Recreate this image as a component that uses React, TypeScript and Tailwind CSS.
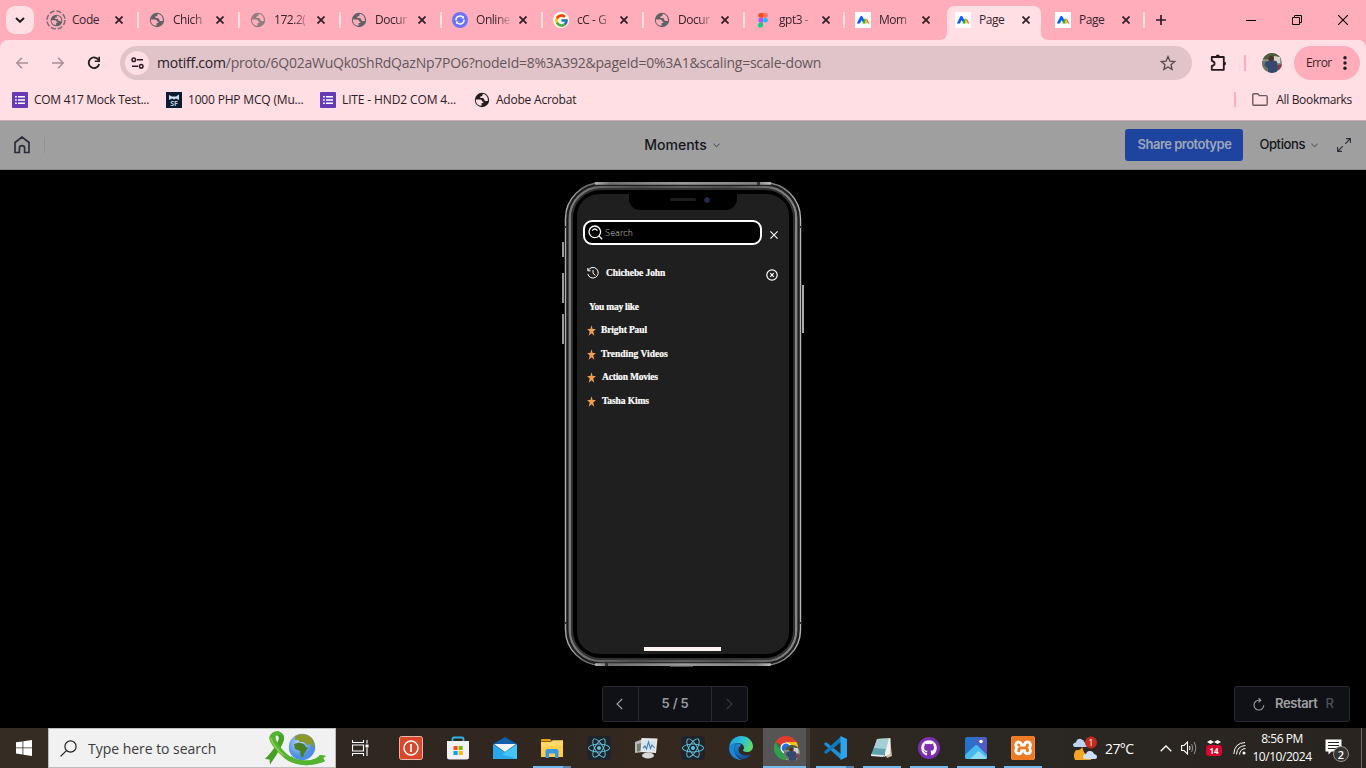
import React from "react";
import { FaReact, FaGithub } from "react-icons/fa";
import { SiXampp } from "react-icons/si";
import { FcGoogle } from "react-icons/fc";

type Kind = "loading" | "globe" | "globeLight" | "sync" | "google" | "figma" | "motiff";

function Globe({ size = 16, color = "#5f6368", bg = "#ffadbb" }: { size?: number; color?: string; bg?: string }) {
  return (
    <svg width={size} height={size} viewBox="0 0 16 16" className="shrink-0">
      <circle cx="8" cy="8" r="7.2" fill={color} />
      <path d="M1.9 7.6H6.2C7.6 7.7 8 8.4 8 9.5H9.3V10.9H7.6V13.6C5.6 13.8 3.6 12.8 2.6 11.2C2.1 10.2 1.8 8.8 1.9 7.6Z" fill={bg} />
      <path d="M8.6 2.2L8.2 4.2H6.4V6H8.6C10 6.2 10.2 7.4 10.6 8.4C11.4 9.2 12.8 8.8 13.8 8.9C14.4 5.6 12.4 2.8 9.4 2.1Z" fill={bg} />
    </svg>
  );
}

function Favicon({ kind }: { kind: Kind }) {
  switch (kind) {
    case "loading":
      return (
        <span className="relative flex h-4 w-4 items-center justify-center">
          <Globe size={13} />
          <svg width="20" height="20" viewBox="0 0 20 20" className="absolute -left-0.5 -top-0.5">
            <circle cx="10" cy="10" r="9" fill="none" stroke="#7d6b70" strokeWidth="1.5" strokeDasharray="5.2 1.9" />
          </svg>
        </span>
      );
    case "globe":
      return <Globe />;
    case "globeLight":
      return <Globe color="#8b7f84" />;
    case "sync":
      return (
        <svg width="16" height="16" viewBox="0 0 16 16">
          <circle cx="8" cy="8" r="8" fill="#6b74f8" />
          <path d="M4 8.4A4 4 0 0 1 10.8 5.2M12 7.6A4 4 0 0 1 5.200 10.800" fill="none" stroke="#fff" strokeWidth="1.5" />
          <path d="M12 3.8V6.600H9.4ZM4 12.2V9.4H6.6Z" fill="#fff" />
        </svg>
      );
    case "google":
      return (
        <span className="flex h-4 w-4 items-center justify-center rounded-full bg-white">
          <FcGoogle size={15} />
        </span>
      );
    case "figma":
      return (
        <svg width="16" height="16" viewBox="0 0 16 16">
          <path d="M8 1H5.6A2.4 2.4 0 0 0 5.6 5.8H8Z" fill="#f24e1e" />
          <path d="M8 1H10.6A2.4 2.4 0 0 1 10.6 5.8H8Z" fill="#ff7262" />
          <path d="M8 5.8H5.6A2.4 2.4 0 0 0 5.6 10.6H8Z" fill="#a259ff" />
          <circle cx="10.5" cy="8.2" r="2.4" fill="#1abcfe" />
          <path d="M8 10.6H5.6A2.5 2.5 0 1 0 8 13.2Z" fill="#0acf83" />
        </svg>
      );
    default:
      return (
        <svg width="16" height="16" viewBox="0 0 16 16">
          <rect width="16" height="16" fill="#fff" />
          <path d="M1.8 11.500L5.400 4.200Q6.200 3.600 7.400 4.200L9.400 8.500L8 10.500L6.600 8L5 11.500Z" fill="#0b5cff" />
          <path d="M7.400 11.500L9.400 7Q10.200 6.200 11 7L10.400 11.500Z" fill="#11b34a" />
          <path d="M9.800 11.500L10.600 6.800Q11.600 6.400 12 7.600L11.800 11.500Z" fill="#ffc400" />
          <path d="M11.400 7L12.400 7.600L14.200 11.500H12.800Z" fill="#f2453d" />
        </svg>
      );
  }
}

const tabs: { title: string; kind: Kind; active?: boolean; narrow?: boolean; sep?: boolean }[] = [
  { title: "Code", kind: "loading", sep: true },
  { title: "Chich", kind: "globe", sep: true },
  { title: "172.2(", kind: "globeLight", sep: true },
  { title: "Docur", kind: "globe", sep: true },
  { title: "Online", kind: "sync", sep: true },
  { title: "cC - G", kind: "google", sep: true },
  { title: "Docur", kind: "globe", sep: true },
  { title: "gpt3 -", kind: "figma", narrow: true, sep: true },
  { title: "Mom", kind: "motiff", narrow: true },
  { title: "Page", kind: "motiff", narrow: true, active: true },
  { title: "Page", kind: "motiff", narrow: true, sep: true },
];

function TabItem({ tab }: { tab: (typeof tabs)[number] }) {
  const fade = tab.title === "Page" || tab.title === "Code" ? "text-[#33262a]" : "[mask-image:linear-gradient(to_right,#000_60%,transparent_105%)]";
  return (
    <div className={`relative flex h-7 shrink-0 items-center pl-[11px] ${tab.narrow ? "w-[100px]" : "w-[101px]"}`}>
      {tab.active && (
        <svg width="110" height="34" viewBox="0 0 110 34" className="absolute -left-[5px] top-0">
          <path d="M0 34Q8 34 8 26V8Q8 0 16 0H94Q102 0 102 8V26Q102 34 110 34Z" fill="#ffdee4" />
        </svg>
      )}
      <span className="relative flex h-4 w-4 shrink-0 items-center justify-center"><Favicon kind={tab.kind} /></span>
      <span className={`relative ml-2 w-[34px] whitespace-nowrap text-[12px] leading-4 tracking-[-0.45px] text-[#33262a] ${fade}`}>
        {tab.title}
      </span>
      <svg width="8" height="8" viewBox="0 0 8 8" className="relative ml-[9px]">
        <path d="M0.5 0.5L7.5 7.5M7.5 0.5L0.5 7.5" stroke="#2b1d21" strokeWidth="1.7" />
      </svg>
      {tab.sep && <span className="-mr-px ml-auto h-4 w-[2px] bg-[#ffdee4]" />}
    </div>
  );
}

function TabStrip() {
  return (
    <div className="flex h-10 items-start bg-[#ffadbb] pt-[6px]">
      <div className="ml-[6px] flex h-7 w-7 items-center justify-center rounded-[9px] bg-[#ffdee4]">
        <svg width="10" height="6" viewBox="0 0 10 6"><path d="M1 1L5 4.8L9 1" fill="none" stroke="#1f1f1f" strokeWidth="2" /></svg>
      </div>
      <div className="flex pl-[3px]">
        {tabs.map((t, i) => <TabItem key={i} tab={t} />)}
      </div>
      <div className="flex h-7 flex-1 items-center">
        <svg width="10" height="10" viewBox="0 0 10 10" className="ml-[12px]"><path d="M5 0V10M0 5H10" stroke="#2b1d21" strokeWidth="1.7" /></svg>
        <div className="ml-auto flex items-center">
          <svg width="10" height="10" viewBox="0 0 10 10"><path d="M0 5.5H10" stroke="#000" /></svg>
          <svg width="10" height="10" viewBox="0 0 10 10" className="ml-9"><path d="M0.5 2.5H7.5V9.5H0.5ZM2.5 2.5V0.5H9.5V7.5H7.5" fill="none" stroke="#000" /></svg>
          <svg width="10" height="10" viewBox="0 0 10 10" className="ml-9 mr-[18px]"><path d="M0 0L10 10M10 0L0 10" stroke="#000" strokeWidth="1.1" /></svg>
        </div>
      </div>
    </div>
  );
}

function AddressRow() {
  return (
    <div className="bg-[#ffadbb]">
      <div className="flex h-[46px] items-center rounded-t-lg bg-[#ffdee4]">
        <svg width="12" height="12" viewBox="0 0 12 12" className="ml-4"><path d="M12 6H1M6 0.7L0.8 6L6 11.3" fill="none" stroke="#a98f95" strokeWidth="1.6" /></svg>
        <svg width="12" height="12" viewBox="0 0 12 12" className="ml-6"><path d="M0 6H11M6 0.7L11.2 6L6 11.3" fill="none" stroke="#a98f95" strokeWidth="1.6" /></svg>
        <svg width="14" height="14" viewBox="0 0 14 14" className="ml-[23px]">
          <path d="M11.8 4.4A5.3 5.3 0 1 0 12.2 8" fill="none" stroke="#1f1f1f" strokeWidth="1.8" />
          <path d="M12.2 0.8V5.2H7.8" fill="none" stroke="#1f1f1f" strokeWidth="1.6" />
        </svg>
        <div className="ml-[19px] flex h-[34px] w-[1072px] items-center rounded-full bg-[#e1c4c9] pl-[5px]">
          <span className="flex h-6 w-6 items-center justify-center rounded-full bg-[#ffdee4]">
            <svg width="13" height="12" viewBox="0 0 13 12"><g fill="none" stroke="#2b1d21" strokeWidth="1.5"><circle cx="2.8" cy="2.8" r="1.8" /><circle cx="10.2" cy="9.2" r="1.8" /><path d="M6 2.8H12M1 9.2H7" /></g></svg>
          </span>
          <span className="ml-2 whitespace-nowrap text-[14px] leading-5 tracking-[-0.235px] text-[#66565a]">
            <span className="text-[#2a2024]">motiff.com</span>/proto/6Q02aWuQk0ShRdQazNp7PO6?nodeId=8%3A392&amp;pageId=0%3A1&amp;scaling=scale-down
          </span>
          <svg width="16" height="16" viewBox="0 0 16 16" className="ml-auto mr-4"><path d="M8 1.6L9.9 6.1L14.7 6.5L11 9.7L12.1 14.3L8 11.9L3.9 14.3L5 9.7L1.3 6.5L6.1 6.1Z" fill="none" stroke="#55494c" strokeWidth="1.3" /></svg>
        </div>
        <svg width="18" height="18" viewBox="0 0 18 18" className="ml-[18px]">
          <path d="M1.8 3H13.8V15.8H1.8V12Q4.6 11.4 4.6 9.4Q4.6 7.4 1.8 6.8Z" fill="none" stroke="#241a1d" strokeWidth="1.8" strokeLinejoin="round" />
          <path d="M5.8 2.6A2 2 0 0 1 9.8 2.6ZM14 7.4A2 2 0 0 1 14 11.4Z" fill="#241a1d" />
        </svg>
        <span className="ml-4 h-4 w-[2px] bg-[#ffadbb]" />
        <span className="ml-4"><Avatar size={20} /></span>
        <div className="ml-3 flex h-[34px] w-[66px] items-center rounded-full bg-[#ffadbb] pl-3 text-[12px] text-[#33262a]">
          <span className="tracking-[-0.6px]">Error</span>
          <svg width="4" height="14" viewBox="0 0 4 14" className="ml-[11px]"><g fill="#1f1f1f"><circle cx="2" cy="1.8" r="1.7" /><circle cx="2" cy="7" r="1.7" /><circle cx="2" cy="12.2" r="1.7" /></g></svg>
        </div>
      </div>
    </div>
  );
}

function Avatar({ size }: { size: number }) {
  return (
    <svg width={size} height={size} viewBox="0 0 20 20" className="block">
      <clipPath id="av"><circle cx="10" cy="10" r="10" /></clipPath>
      <g clipPath="url(#av)">
        <rect width="20" height="20" fill="#8d9086" />
        <path d="M0 0H20V5L14 7L0 6Z" fill="#4d5a3c" />
        <path d="M12 3L18 4V10H12Z" fill="#d3d3cc" />
        <path d="M0 8H5V20H0Z" fill="#6d7468" />
        <path d="M15 12L20 11V16L16 17Z" fill="#8c3b45" />
        <path d="M3.5 9Q9 6 15 8.5L16 16L14 20H6L5.5 15L2.5 12.5Z" fill="#34496e" />
        <circle cx="9" cy="5.6" r="2.6" fill="#4a3029" />
      </g>
    </svg>
  );
}

function FormsIcon() {
  return (
    <svg width="16" height="16" viewBox="0 0 16 16">
      <rect width="16" height="16" rx="1" fill="#673ab7" />
      <path d="M3 4H4.8V5.6H3ZM3 7.2H4.8V8.8H3ZM3 10.4H4.8V12H3ZM6 4H13V5.6H6ZM6 7.2H13V8.8H6ZM6 10.4H13V12H6Z" fill="#fff" />
    </svg>
  );
}

function Bookmarks() {
  return (
    <div className="flex h-[34px] items-center bg-[#ffdee4] pb-[7px] pl-3 text-[12px] text-[#2a2024]">
      <FormsIcon />
      <span className="ml-[6px] w-[116px] whitespace-nowrap tracking-[-0.27px]">COM 417 Mock Test...</span>
      <span className="ml-4 flex h-4 w-4 flex-col items-center justify-end bg-[#0c1c30]">
        <svg width="12" height="6" viewBox="0 0 12 6"><path d="M1 6V1L4 2.5H8L11 0.5V6L8 4.5L6 5.5L4 4.5Z" fill="#cfe0ea" /></svg>
        <span className="text-[7px] font-bold leading-[8px] text-[#b9d0dc]">SF</span>
      </span>
      <span className="ml-[6px] w-[116px] whitespace-nowrap tracking-[-0.18px]">1000 PHP MCQ (Mu...</span>
      <span className="ml-4"><FormsIcon /></span>
      <span className="ml-[6px] w-[116px] whitespace-nowrap tracking-[-0.13px]">LITE - HND2 COM 4...</span>
      <span className="ml-4"><Globe color="#1f1f1f" bg="#ffdee4" /></span>
      <span className="ml-[6px] whitespace-nowrap tracking-[-0.22px]">Adobe Acrobat</span>
      <span className="ml-auto h-[15px] w-[2px] bg-[#ffadbb]" />
      <svg width="16" height="13" viewBox="0 0 16 13" className="ml-4"><path d="M0.8 2Q0.8 0.8 2 0.8H5.8L7.4 2.6H14Q15.2 2.6 15.2 3.8V11Q15.2 12.2 14 12.2H2Q0.8 12.2 0.8 11Z" fill="none" stroke="#6b5a5e" strokeWidth="1.4" /></svg>
      <span className="ml-2 mr-[14px] whitespace-nowrap tracking-[-0.32px]">All Bookmarks</span>
    </div>
  );
}

function Header() {
  return (
    <div className="grid h-[50px] shrink-0 grid-cols-[1fr_auto_1fr] items-center border-b border-t border-b-[#8c8c8c] border-t-[#c9adb3] bg-[#9f9f9f] font-[Inter]">
      <div className="flex items-center">
        <svg width="16" height="18" viewBox="0 0 16 18" className="ml-[14px]"><path d="M1 16.5V6.5L8 1L15 6.5V16.5H10.6V12Q10.6 9.6 8 9.6Q5.4 9.6 5.4 12V16.5Z" fill="none" stroke="#2c2d3a" strokeWidth="1.7" /></svg>
        <span className="ml-[14px] h-4 w-px bg-[#929292]" />
      </div>
      <div className="flex items-center pr-[2px]">
        <span className="text-[14px] font-medium leading-5 text-[#15161c]">Moments</span>
        <svg width="7" height="5" viewBox="0 0 7 5" className="ml-[6px]"><path d="M0.5 0.7L3.5 3.8L6.5 0.7" fill="none" stroke="#5d5e66" strokeWidth="1.1" /></svg>
      </div>
      <div className="flex items-center justify-end">
        <div className="flex h-8 w-[118px] items-center justify-center rounded-[3px] bg-[#1e449f] text-[13px] font-semibold tracking-[-0.5px] text-[#9fa6b8]">Share prototype</div>
        <span className="ml-[16px] text-[13px] font-medium tracking-[-0.4px] text-[#15161c]">Options</span>
        <svg width="7" height="5" viewBox="0 0 7 5" className="ml-[6px]"><path d="M0.5 0.7L3.5 3.8L6.5 0.7" fill="none" stroke="#5d5e66" strokeWidth="1.1" /></svg>
        <svg width="14" height="14" viewBox="0 0 14 14" className="ml-[19px] mr-[15px]"><path d="M9 0.6H13.4V5M13 1L8.2 5.8M0.6 9V13.4H5M1 13L5.8 8.2" fill="none" stroke="#2c2d3a" strokeWidth="1.1" /></svg>
      </div>
    </div>
  );
}

function PhoneFrame() {
  return (
    <svg width="242" height="486" viewBox="0 0 242 486" className="absolute -left-[3px] top-0">
      <defs>
        <linearGradient id="rim" x1="0" x2="1" y1="0" y2="0">
          <stop offset="0" stopColor="#b0b0b0" /><stop offset="0.08" stopColor="#707070" /><stop offset="0.5" stopColor="#9a9a9a" /><stop offset="0.92" stopColor="#808080" /><stop offset="1" stopColor="#b8b8b8" />
        </linearGradient>
        <linearGradient id="bezel" x1="0" x2="1" y1="0" y2="0">
          <stop offset="0" stopColor="#7b7b7b" /><stop offset="0.3" stopColor="#4c4c4c" /><stop offset="0.5" stopColor="#5e5e5e" /><stop offset="0.7" stopColor="#4c4c4c" /><stop offset="1" stopColor="#858585" />
        </linearGradient>
      </defs>
      <path d="M1 60V75M1 91V121M1 132V162" stroke="#9a9a9a" strokeWidth="2" />
      <path d="M241 103V151" stroke="#a8a8a8" strokeWidth="2" />
      <rect x="3.5" y="0.8" width="235" height="482.6" rx="36" fill="#1d1d1d" stroke="url(#rim)" strokeWidth="1.4" />
      <path d="M34 1.4H208M34 482.6H208" stroke="url(#rim)" strokeWidth="2.6" strokeLinecap="round" />
      <rect x="7.8" y="5.200" width="226.4" height="473.8" rx="31" fill="#000" stroke="url(#bezel)" strokeWidth="2.4" />
      <rect x="10" y="7.2" width="222" height="469.800" rx="29" fill="#000" stroke="#333" strokeWidth="1.8" />
      <path d="M195 0V3H198V0ZM43 481V484H46V481ZM3 44H5V46H3ZM237 44H239V46H237ZM3 440H5V442H3ZM237 440H239V442H237Z" fill="#333" />
      <path d="M108 484.4H131" stroke="#555" />
    </svg>
  );
}

const star = "M8 0.2L10 5.8H15.9L11.2 9.400L13 15.800L8 12L3 15.800L4.800 9.400L0.1 5.8H6Z";

function PhoneScreen() {
  const likes = [
    { label: "Bright Paul", cls: "pl-[5px] tracking-[-0.12px]" },
    { label: "Trending Videos", cls: "pl-[5px] tracking-[0.02px]" },
    { label: "Action Movies", cls: "pl-[6px] tracking-[-0.2px]" },
    { label: "Tasha Kims", cls: "pl-[6px] tracking-[-0.1px]" },
  ];
  return (
    <div className="relative flex h-[460px] w-[212px] flex-col overflow-hidden rounded-[22px] bg-[#1f1f1f] font-['Liberation_Serif',serif] text-[9.5px] font-bold text-white [-webkit-text-stroke:0.2px_#fff]">
      <div className="flex h-4 w-[108px] items-center self-center rounded-b-[11px] bg-black pb-[5px] pl-[41px]">
        <span className="h-[3px] w-[26px] rounded bg-[#1d1d1f]" />
        <span className="ml-[8px] h-[6px] w-[6px] rounded-full border border-[#20243c] bg-[#1b2f60]" />
      </div>
      <div className="mt-[10px] flex items-center pl-[6px]">
        <div className="flex h-[25px] w-[179px] items-center rounded-[9px] border-2 border-white bg-black pl-[3px]">
          <svg width="15" height="15" viewBox="0 0 15 15"><g fill="none" stroke="#fff" strokeWidth="1.3"><circle cx="6.8" cy="6.8" r="5.8" /><path d="M11 11L14.2 14.2M4.2 5.6Q6.8 2.4 9.4 5.6" /></g></svg>
          <span className="ml-[2px] pt-[2px] font-['DejaVu_Sans',sans-serif] text-[8px] font-extralight tracking-[0.05px] text-[#e0e0e0] [-webkit-text-stroke:0px]">Search</span>
        </div>
        <svg width="8" height="8" viewBox="0 0 8 8" className="ml-[7.500px] mt-[5px]"><path d="M0.4 0.4L7.6 7.6M7.6 0.4L0.4 7.6" stroke="#fff" strokeWidth="1.1" /></svg>
      </div>
      <div className="mt-[20px] flex h-4 items-center pl-[10px]">
        <svg width="12" height="12" viewBox="0 0 12 12"><path d="M1.2 3.4A5.3 5.3 0 1 1 0.8 7M0.8 1V3.8H3.6M6 3V6.2L8.4 8.4" fill="none" stroke="#fff" strokeWidth="1" /></svg>
        <span className="ml-[7px] tracking-[-0.1px]">Chichebe John</span>
        <svg width="12" height="12" viewBox="0 0 12 12" className="ml-auto mr-[11px] mt-[3px]"><circle cx="6" cy="6" r="5.2" fill="none" stroke="#fff" strokeWidth="1.2" /><path d="M4.200 4.200L7.800 7.800M7.800 4.200L4.200 7.800" stroke="#fff" strokeWidth="1.2" /></svg>
      </div>
      <div className="mt-[20px] h-3 pl-[12px] leading-3 tracking-[-0.25px]">You may like</div>
      <div className="mt-[5px] flex flex-col">
        {likes.map((l) => (
          <div key={l.label} className="flex h-[23.7px] items-center pl-[10px]">
            <svg width="9" height="11" viewBox="0 0 16 16" preserveAspectRatio="none" className="mt-px"><path d={star} fill="#f0a04b" /></svg>
            <span className={`whitespace-nowrap leading-3 ${l.cls}`}>{l.label}</span>
          </div>
        ))}
      </div>
      <div className="mb-[3px] mr-[2px] mt-auto h-1 w-[77px] self-center bg-[#fff5f5]" />
    </div>
  );
}

function Stage() {
  return (
    <div className="relative flex h-[558px] shrink-0 flex-col items-center bg-black pt-[12px] font-[Inter]">
      <div className="relative h-[486px] w-[236px]">
        <PhoneFrame />
        <div className="flex justify-center pt-[12px]"><PhoneScreen /></div>
      </div>
      <div className="grid w-full grid-cols-[1fr_146px_1fr] items-center pt-[18px]">
        <span />
        <div className="-ml-2 flex h-9 w-[146px] rounded-[3px] border border-[#292b34] bg-[#101116] text-[13px] font-semibold text-[#9a9a9c]">
          <span className="flex w-9 items-center justify-center border-r border-[#292b34]"><svg width="7" height="12" viewBox="0 0 7 12" className="mr-[2px]"><path d="M6.2 1L1 6L6.2 11" fill="none" stroke="#a5a5a8" strokeWidth="1.1" /></svg></span>
          <span className="flex flex-1 items-center justify-center tracking-[-0.2px]">5 / 5</span>
          <span className="flex w-9 items-center justify-center border-l border-[#292b34]"><svg width="7" height="12" viewBox="0 0 7 12"><path d="M0.8 1L6 6L0.8 11" fill="none" stroke="#37383f" strokeWidth="1.1" /></svg></span>
        </div>
        <div className="mr-4 flex h-9 w-[116px] items-center justify-self-end rounded-[3px] border border-[#292b34] bg-[#101116] pl-[18px] text-[13px] font-semibold text-[#a0a0a2]">
          <svg width="12" height="13" viewBox="0 0 12 13"><path d="M7.4 2.2H5.8A4.9 4.9 0 1 0 10.8 7.2M5.6 0.2L7.8 2.3L5.6 4.4" fill="none" stroke="#a0a0a2" strokeWidth="1.1" /></svg>
          <span className="ml-[10px] tracking-[-0.4px]">Restart</span>
          <span className="ml-2 font-medium text-[#4e4f57]">R</span>
        </div>
      </div>
    </div>
  );
}

function PowerIcon() {
  return (
    <svg width="24" height="24" viewBox="0 0 24 24"><rect x="0.5" y="0.5" width="23" height="23" rx="2" fill="#d9472b" stroke="#eeb6a8" /><circle cx="12" cy="12" r="7" fill="none" stroke="#fff" strokeWidth="1.5" /><path d="M12 8V16" stroke="#fff" strokeWidth="1.7" /></svg>
  );
}
function StoreIcon() {
  return (
    <svg width="24" height="24" viewBox="0 0 24 24"><path d="M6.500 6V3Q6.500 1.500 8 1.500H16Q17.500 1.500 17.500 3V6" fill="none" stroke="#2bb5e8" strokeWidth="1.8" /><path d="M1 5H23V21Q23 23.5 20.500 23.5H3.5Q1 23.5 1 21Z" fill="#f2f2f2" /><path d="M7.500 10H11.600V14H7.500Z" fill="#f25022" /><path d="M12.6 10H16.7V14H12.6Z" fill="#7fba00" /><path d="M7.500 15H11.600V19H7.500Z" fill="#00a4ef" /><path d="M12.6 15H16.7V19H12.6Z" fill="#ffb900" /></svg>
  );
}
function MailIcon() {
  return (
    <svg width="24" height="22" viewBox="0 0 24 22"><path d="M0 7L12 0L24 7V22H0Z" fill="#0f5fae" /><path d="M1 7H23L12 15Z" fill="#f4f4f4" /><path d="M0 7.200L12 15.200L24 7.200V22H0Z" fill="#29a9ea" /><path d="M24 7.200L9 17.500L24 22Z" fill="#45c4f5" /></svg>
  );
}
function FolderIcon() {
  return (
    <svg width="22" height="19" viewBox="0 0 22 19"><path d="M0 1Q0 0 1 0H9L11 2.500H0Z" fill="#e7a20c" /><path d="M0 3H10L12 1.500H22V18H0Z" fill="#ffcf4b" /><path d="M0 3.500H9.500L11.500 1.500H22V6L0 8Z" fill="#ffd96b" /><path d="M4.500 19V12Q4.500 10 6.500 10H15.500Q17.500 10 17.500 12V19H14V14.500H8V19Z" fill="#3a98e0" /></svg>
  );
}
function ReactIcon() {
  return <span className="flex h-6 w-6 items-center justify-center rounded bg-[#20232a]"><FaReact size={22} color="#61c5df" /></span>;
}
function MonitorIcon() {
  return (
    <svg width="24" height="22" viewBox="0 0 24 22"><path d="M1 5L9 2V15L1 16Z" fill="#b9b9b9" /><path d="M3 7L8 6V14L3 14.500Z" fill="#6f7d6b" /><path d="M7.500 1L23.500 1.500L22 16L6.500 15Z" fill="#e9e9e9" /><path d="M9 3L21.800 3.400L20.800 14L8.200 13.300Z" fill="#d4e4f2" /><path d="M9 11L11 9L12.500 12L14.500 5L16.500 11.500L18 8L20.500 11" fill="none" stroke="#4a7fae" strokeWidth="1.100" /><ellipse cx="14" cy="18.500" rx="6" ry="3" fill="#d9d9d9" /></svg>
  );
}
function EdgeIcon() {
  return (
    <svg width="24" height="24" viewBox="0 0 24 24">
      <defs>
        <linearGradient id="eg1" x1="0" x2="1" y1="0.2" y2="0.5"><stop offset="0" stopColor="#1b9de2" /><stop offset="0.55" stopColor="#2cc3d5" /><stop offset="1" stopColor="#5fdc63" /></linearGradient>
        <linearGradient id="eg2" x1="0" x2="0.6" y1="0" y2="1"><stop offset="0" stopColor="#1a8fe0" /><stop offset="1" stopColor="#0f4fa5" /></linearGradient>
      </defs>
      <path d="M0.200 11.500C0.500 5 5.500 0 12 0C19 0 24 5 24 10.500C24 14 21 16 18 16C15.500 16 14 15.200 14 14.300C14 13.700 15 13.200 15 11.700C15 9 12 7 8.500 7C4.500 7 1 9.500 0.200 11.500Z" fill="url(#eg1)" />
      <path d="M0 12C1 9 4.500 7 8.500 7C6 8.500 5 11.500 5.500 15C6.300 19.500 9.500 23 13 24C6 24.500 0 19 0 12Z" fill="#1a86dc" />
      <path d="M8.500 7.500C5 9.500 4.500 15 7.500 19C10.500 23.500 16 25 22 18.500C17 20.500 11.500 19.500 9.800 15.500C9 13 10 11.500 11 10.500C13 9 11 6.800 8.500 7.500Z" fill="url(#eg2)" />
    </svg>
  );
}
function ChromeIcon() {
  return (
    <span className="relative block h-6 w-[25px]">
      <svg width="24" height="24" viewBox="0 0 24 24">
        <path d="M12 12L1.600 6A12 12 0 0 1 22.400 6Z" fill="#e33b2e" /><path d="M12 12V6H22.400A12 12 0 0 1 12 24Z" fill="#fbc116" /><path d="M12 12L17 15L12 24A12 12 0 0 1 1.600 6L7 15Z" fill="#2da04e" /><circle cx="12" cy="12" r="5.600" fill="#fff" /><circle cx="12" cy="12" r="4.400" fill="#1a73e8" />
      </svg>
      <span className="absolute left-[10px] top-[9px]"><Avatar size={16} /></span>
    </span>
  );
}
function CodeIcon() {
  return (
    <svg width="24" height="24" viewBox="0 0 24 24"><path d="M0.800 8L3 6L18 18V23.500Z" fill="#1f8fd6" /><path d="M0.800 16L3 18L18 6V0.500Z" fill="#0e78c0" /><path d="M17.500 0L24 3V21L17.500 24Z" fill="#2ba3ee" /></svg>
  );
}
function NotepadIcon() {
  return (
    <svg width="24" height="22" viewBox="0 0 24 22"><path d="M7 2L20 1L22 19L17 21Z" fill="#c9c0a0" /><path d="M7 2L19 1.500L14 19L1 18Z" fill="#5fa3ae" /><path d="M7 2L19 1.500L16 12L4 11Z" fill="#a5cfd6" /><path d="M1 17.200L14 18.200L13.500 20L1 19Z" fill="#e4ebeb" /><path d="M19 1L20.500 1.500L20 17L14 20Z" fill="#f1f1f1" /></svg>
  );
}
function GithubIcon() {
  return <span className="flex h-[22px] w-[22px] items-center justify-center rounded-full bg-[#7e2fb0]"><FaGithub size={16} color="#fff" /></span>;
}
function PhotosIcon() {
  return (
    <svg width="22" height="22" viewBox="0 0 22 22"><defs><linearGradient id="ph" x1="0" x2="1"><stop offset="0" stopColor="#1a78d0" /><stop offset="1" stopColor="#5b56c0" /></linearGradient></defs><rect width="22" height="22" rx="2" fill="url(#ph)" /><path d="M0 18L10 8.500Q11.500 7.500 13 9L22 18V20Q22 22 20 22H2Q0 22 0 20Z" fill="#46b9ee" /><path d="M5 22L13.500 14L22 21Q21.500 22 20 22Z" fill="#8adcf8" /><circle cx="16" cy="4.500" r="1.800" fill="#fff" /></svg>
  );
}
function XamppIcon() {
  return <span className="flex h-6 w-6 items-center justify-center rounded-[3px] bg-white"><SiXampp size={24} color="#ee7a26" /></span>;
}

const apps: { icon: () => React.ReactElement; state?: "open" | "active" | "stack" }[] = [
  { icon: PowerIcon },
  { icon: StoreIcon },
  { icon: MailIcon },
  { icon: FolderIcon, state: "stack" },
  { icon: ReactIcon },
  { icon: MonitorIcon },
  { icon: ReactIcon },
  { icon: EdgeIcon },
  { icon: ChromeIcon, state: "active" },
  { icon: CodeIcon, state: "stack" },
  { icon: NotepadIcon, state: "open" },
  { icon: GithubIcon, state: "open" },
  { icon: PhotosIcon, state: "open" },
  { icon: XamppIcon, state: "open" },
];

function EarthRibbon() {
  return (
    <svg width="62" height="36" viewBox="0 0 62 36">
      <defs><radialGradient id="sea" cx="0.4" cy="0.35"><stop offset="0" stopColor="#b5d9ff" /><stop offset="1" stopColor="#4d8fe4" /></radialGradient></defs>
      <path d="M13 1.500Q20 3 19 10Q16 19 5 34.500L4.500 29.500L0 29Q9 20 13.500 10Q14.500 6 12 5.500Z" fill="#46a022" />
      <path d="M4 8Q6 1 13 1Q17 2 17 5Q13 4 11 6Q10 8 12 12Q17 21 26 27Q34 32 46 30Q52 29 55 25L61 26L58 28L60 31Q50 36 38 35Q24 34 16 25Q6 16 4 8Z" fill="#55b42f" />
      <path d="M6 7Q9 16 20 26L17 25Q7 16 5 8Z" fill="#8bd14f" />
      <circle cx="37" cy="17" r="13.200" fill="url(#sea)" />
      <path d="M30 6Q36 3 42 5Q48 7 49 13L48 18L45 14L42 15L39 12L35 12L33 10L30 10Z" fill="#8b9a2a" />
      <path d="M29 14L34 12.500L39 14L41 17L43 18L40 22L38 27L36 27L35 21L30 19Z" fill="#4a7f22" />
      <path d="M26 26Q34 32 46 30Q52 29 55 25L61 26L58 28L60 31Q50 36 38 35Q31 34 25 31Z" fill="#55b42f" />
    </svg>
  );
}

function Taskbar() {
  return (
    <div className="flex h-10 shrink-0 bg-[#302720] bg-[linear-gradient(to_right,#352c23_0%,#2f2620_30%,#35291f_50%,#2b2722_70%,#29241f_100%)] font-['Open_Sans',sans-serif] text-white">
      <div className="flex w-12 items-center justify-center">
        <svg width="16" height="16" viewBox="0 0 16 16"><path d="M0 2.300L6.500 1.400V7.500H0ZM7.300 1.300L16 0V7.500H7.300ZM0 8.300H6.500V14.500L0 13.600ZM7.300 8.300H16V16L7.300 14.700Z" fill="#fff" /></svg>
      </div>
      <div className="flex w-[288px] items-center border border-[#bcbcbc] bg-[#f1f1f1] pl-[11px]">
        <svg width="17" height="17" viewBox="0 0 17 17"><circle cx="10.500" cy="6.500" r="5.600" fill="none" stroke="#222" strokeWidth="1.200" /><path d="M6.400 10.600L0.600 16.400" stroke="#222" strokeWidth="1.300" /></svg>
        <span className="ml-[11px] whitespace-nowrap text-[14px] tracking-[-0.03px] text-[#3b3b3b]">Type here to search</span>
        <span className="ml-auto mr-[8px]"><EarthRibbon /></span>
      </div>
      <div className="flex w-12 items-center justify-center">
        <svg width="17" height="16" viewBox="0 0 17 16"><path d="M0.500 0V2.500H11.500V0M0.500 5H11.500V11H0.500ZM0.500 16V13.500H11.500V16M15 0V3.500M15 8V16" fill="none" stroke="#fff" strokeWidth="1.100" /><rect x="13.500" y="4.500" width="3" height="3" fill="#fff" /></svg>
      </div>
      <div className="ml-[3px] grid w-[660px] grid-cols-[repeat(14,1fr)]">
        {apps.map(({ icon: Icon, state }, i) => (
          <div key={i} className={`grid grid-rows-[38px_2px] justify-items-center ${state === "active" ? "-ml-px mr-px border-r-4 border-[#3f3d3a] bg-[#575553] pl-[3px]" : ""}`}>
            <span className="flex items-center pt-[2px]"><Icon /></span>
            {state && (
              <span className={`flex h-[2px] bg-[#76b9ed] ${state === "active" ? "-ml-[3px] w-[calc(100%+3px)]" : "w-[38px]"}`}>
                {state === "stack" && <span className="ml-auto w-2 bg-[#5684ab]" />}
              </span>
            )}
          </div>
        ))}
      </div>
      <div className="ml-auto flex items-center">
        <svg width="26" height="24" viewBox="0 0 26 24">
          <path d="M10 8A9 9 0 0 0 19 20A9 9 0 1 1 3 14Q9 15 10 8Z" fill="#f5a524" />
          <path d="M2 11Q0 11 0 9Q0 7 3 6.500Q4 2 8 3Q11 4 12 7Q15 7 15 9Q15 11 13 11Z" fill="#bcd3f5" />
          <path d="M12 23Q10 22.500 10 20.500Q10 18.500 13 18Q14 14.500 17 15Q20 15 21 18Q24 18.500 24 21Q24 23 22 23Z" fill="#cfdff8" />
          <circle cx="18" cy="6.500" r="6" fill="#c42b1c" /><text x="18" y="9.500" fontSize="8.500" fill="#fff" textAnchor="middle" fontFamily="Open Sans">1</text>
        </svg>
        <span className="ml-[6px] w-[30px] whitespace-nowrap text-[14px] tracking-[-0.6px]">27°C</span>
        <svg width="12" height="7" viewBox="0 0 12 7" className="ml-[25px]"><path d="M0.700 6.300L6 1L11.300 6.300" fill="none" stroke="#fff" strokeWidth="1.300" /></svg>
        <svg width="17" height="14" viewBox="0 0 17 14" className="ml-[9px]"><path d="M0.600 4.500H3L6.500 1V13L3 9.500H0.600Z" fill="none" stroke="#fff" strokeWidth="1.100" /><path d="M8.500 5Q9.500 7 8.500 9" fill="none" stroke="#fff" /><path d="M10.500 3Q12.700 7 10.500 11M13 1Q16.500 7 13 13" fill="none" stroke="#8a8683" strokeWidth="1.100" /></svg>
        <span className="ml-2 flex w-4 flex-col items-center">
          <svg width="14" height="4" viewBox="0 0 14 4"><path d="M0 2L3.500 0L7 2L10.500 0L14 2L10.500 4L7 2L3.500 4Z" fill="#fff" /></svg>
          <span className="mt-px flex h-[11px] w-4 items-center justify-center rounded-[3px] bg-[#d9042b] text-[8px] font-bold leading-none">14</span>
        </span>
        <svg width="13" height="14" viewBox="0 0 13 14" className="ml-[11px]"><g fill="none" stroke="#fff" strokeWidth="1"><path d="M0.800 13Q1.500 2 12 1.500M3.500 13.500Q4 5 12.500 4.500M6.500 13.500Q7 8 12.500 7.500" /></g><circle cx="11" cy="12" r="1.500" fill="#fff" /></svg>
        <div className="ml-[4px] flex w-[64px] flex-col items-center whitespace-nowrap text-[12px] leading-[18px] tracking-[-0.45px]">
          <span>8:56 PM</span>
          <span>10/10/2024</span>
        </div>
        <span className="relative ml-[11px] h-6 w-6 pt-[3px]">
          <svg width="18" height="17" viewBox="0 0 18 17"><path d="M0.500 0.500H16.500V12.500H6.500L3.500 15.500V12.500H0.500Z" fill="#fff" /><path d="M3 3.500H14M3 6.500H14M3 9.500H14" stroke="#2c2621" /></svg>
          <span className="absolute left-[8px] top-[10px] flex h-4 w-4 items-center justify-center rounded-full border border-[#9a9793] bg-[#38332f] text-[11px] font-semibold leading-none">2</span>
        </span>
        <span className="ml-[12px] h-10 w-px bg-[#6d6864]" />
        <span className="w-[4px]" />
      </div>
    </div>
  );
}

export default function App() {
  return (
    <div className="flex h-[768px] w-[1366px] flex-col overflow-hidden bg-black font-['Open_Sans',sans-serif]">
      <TabStrip />
      <AddressRow />
      <Bookmarks />
      <Header />
      <Stage />
      <Taskbar />
    </div>
  );
}
